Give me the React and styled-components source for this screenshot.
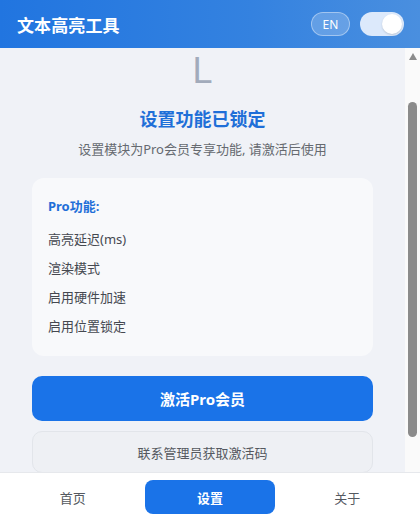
import { useLayoutEffect, useRef } from "react";
import styled, { createGlobalStyle } from "styled-components";

const GlobalStyle = createGlobalStyle`
  html, body, #root {
    margin: 0;
    padding: 0;
    height: 100%;
  }
  body {
    font-family: "Noto Sans", "Noto Sans CJK SC", sans-serif;
    background: #ffffff;
  }
  * {
    box-sizing: border-box;
  }
`;

const features = ["高亮延迟(ms)", "渲染模式", "启用硬件加速", "启用位置锁定"];
const tabs = ["首页", "设置", "关于"];

export default function App() {
  const scrollRef = useRef(null);

  // the page was photographed a little scrolled down
  useLayoutEffect(() => {
    if (scrollRef.current) scrollRef.current.scrollTop = 48;
  }, []);

  return (
    <Shell>
      <GlobalStyle />
      <Header>
        <Title>文本高亮工具</Title>
        <HeaderActions>
          <LangPill>EN</LangPill>
          <Toggle>
            <Knob />
          </Toggle>
        </HeaderActions>
      </Header>

      <Body>
        <Scroller ref={scrollRef}>
          <Content>
            <LockGlyph>L</LockGlyph>
            <LockTitle>设置功能已锁定</LockTitle>
            <LockText>设置模块为Pro会员专享功能, 请激活后使用</LockText>

            <FeatureCard>
              <FeatureHeading>Pro功能:</FeatureHeading>
              <FeatureList>
                {features.map((item) => (
                  <FeatureItem key={item}>{item}</FeatureItem>
                ))}
              </FeatureList>
            </FeatureCard>

            <PrimaryButton>激活Pro会员</PrimaryButton>
            <SecondaryButton>联系管理员获取激活码</SecondaryButton>
          </Content>
        </Scroller>
        <ScrollTrack aria-hidden="true">
          <ScrollArrow />
          <ScrollThumb />
        </ScrollTrack>
      </Body>

      <BottomNav>
        {tabs.map((tab) => (
          <Tab key={tab} $active={tab === "设置"}>
            {tab}
          </Tab>
        ))}
      </BottomNav>
    </Shell>
  );
}

const Shell = styled.div`
  display: flex;
  flex-direction: column;
  height: 520px;
  width: 420px;
  overflow: hidden;
`;

const Header = styled.header`
  display: flex;
  align-items: center;
  justify-content: space-between;
  height: 48px;
  flex-shrink: 0;
  padding: 0 16px 0 17px;
  background: linear-gradient(90deg, #2175e0 0%, #3482e0 60%, #4a8fdf 100%);
`;

const Title = styled.h1`
  margin: 0;
  font-size: 17px;
  font-weight: 700;
  color: #ffffff;
  letter-spacing: 0.1px;
`;

const HeaderActions = styled.div`
  display: flex;
  align-items: center;
  gap: 10px;
`;

const LangPill = styled.span`
  display: flex;
  align-items: center;
  justify-content: center;
  width: 39px;
  height: 24px;
  border-radius: 12px;
  border: 1px solid rgba(255, 255, 255, 0.4);
  background: rgba(255, 255, 255, 0.2);
  color: #ffffff;
  font-size: 12px;
`;

const Toggle = styled.span`
  display: flex;
  align-items: center;
  justify-content: flex-end;
  width: 44px;
  height: 24px;
  padding: 2px;
  border-radius: 12px;
  background: #dce9fb;
`;

const Knob = styled.span`
  width: 20px;
  height: 20px;
  border-radius: 50%;
  background: #ffffff;
  box-shadow: 0 1px 2px rgba(0, 0, 0, 0.15);
`;

const Body = styled.div`
  display: flex;
  flex: 1;
  min-height: 0;
`;

const Scroller = styled.main`
  flex: 1;
  overflow-y: auto;
  scrollbar-width: none;
  background: #f0f2f7;
`;

const ScrollTrack = styled.div`
  display: flex;
  flex-direction: column;
  align-items: center;
  width: 15px;
  flex-shrink: 0;
  padding-top: 5px;
  background: #fafafa;
`;

const ScrollArrow = styled.span`
  width: 0;
  height: 0;
  border-left: 4.5px solid transparent;
  border-right: 4.5px solid transparent;
  border-bottom: 7px solid #8b8b8b;
`;

const ScrollThumb = styled.span`
  width: 9px;
  height: 335px;
  margin-top: 42px;
  border-radius: 5px;
  background: #8b8b8b;
`;

const Content = styled.div`
  display: flex;
  flex-direction: column;
  padding: 51px 32px 44px;
`;

const LockGlyph = styled.div`
  height: 40px;
  font-family: "Liberation Sans", sans-serif;
  font-size: 36px;
  line-height: 40px;
  color: #a2abbb;
  text-align: center;
`;

const LockTitle = styled.h2`
  margin: 16px 0 0;
  font-size: 18px;
  line-height: 24px;
  font-weight: 700;
  color: #1f6fd8;
  text-align: center;
`;

const LockText = styled.p`
  margin: 8px 0 0;
  font-size: 13px;
  line-height: 20px;
  color: #666a70;
  text-align: center;
`;

const FeatureCard = styled.section`
  margin-top: 19px;
  padding: 18px 16px 20px;
  border-radius: 12px;
  background: #f8f9fb;
`;

const FeatureHeading = styled.div`
  font-size: 13px;
  line-height: 20px;
  font-weight: 700;
  color: #1f6fd8;
`;

const FeatureList = styled.ul`
  display: flex;
  flex-direction: column;
  gap: 9px;
  margin: 13px 0 0;
  padding: 0;
  list-style: none;
`;

const FeatureItem = styled.li`
  font-size: 13px;
  line-height: 20px;
  color: #454850;
`;

const PrimaryButton = styled.button`
  margin-top: 20px;
  height: 45px;
  border: none;
  border-radius: 10px;
  background: #1a73e8;
  color: #ffffff;
  font-family: inherit;
  font-size: 15px;
  font-weight: 700;
`;

const SecondaryButton = styled.button`
  margin-top: 10px;
  height: 42px;
  border: 1px solid #e2e5ea;
  border-radius: 10px;
  background: #eef0f4;
  color: #555960;
  font-family: inherit;
  font-size: 13px;
`;

const BottomNav = styled.nav`
  display: flex;
  gap: 8px;
  height: 48px;
  flex-shrink: 0;
  padding: 7px 8px 6px;
  background: #ffffff;
  border-top: 1px solid #e6e8ec;
`;

const Tab = styled.button`
  flex: 1;
  border: none;
  border-radius: 8px;
  background: ${(p) => (p.$active ? "#1a73e8" : "transparent")};
  color: ${(p) => (p.$active ? "#ffffff" : "#555960")};
  font-family: inherit;
  font-size: 13px;
  font-weight: ${(p) => (p.$active ? 700 : 400)};
`;
